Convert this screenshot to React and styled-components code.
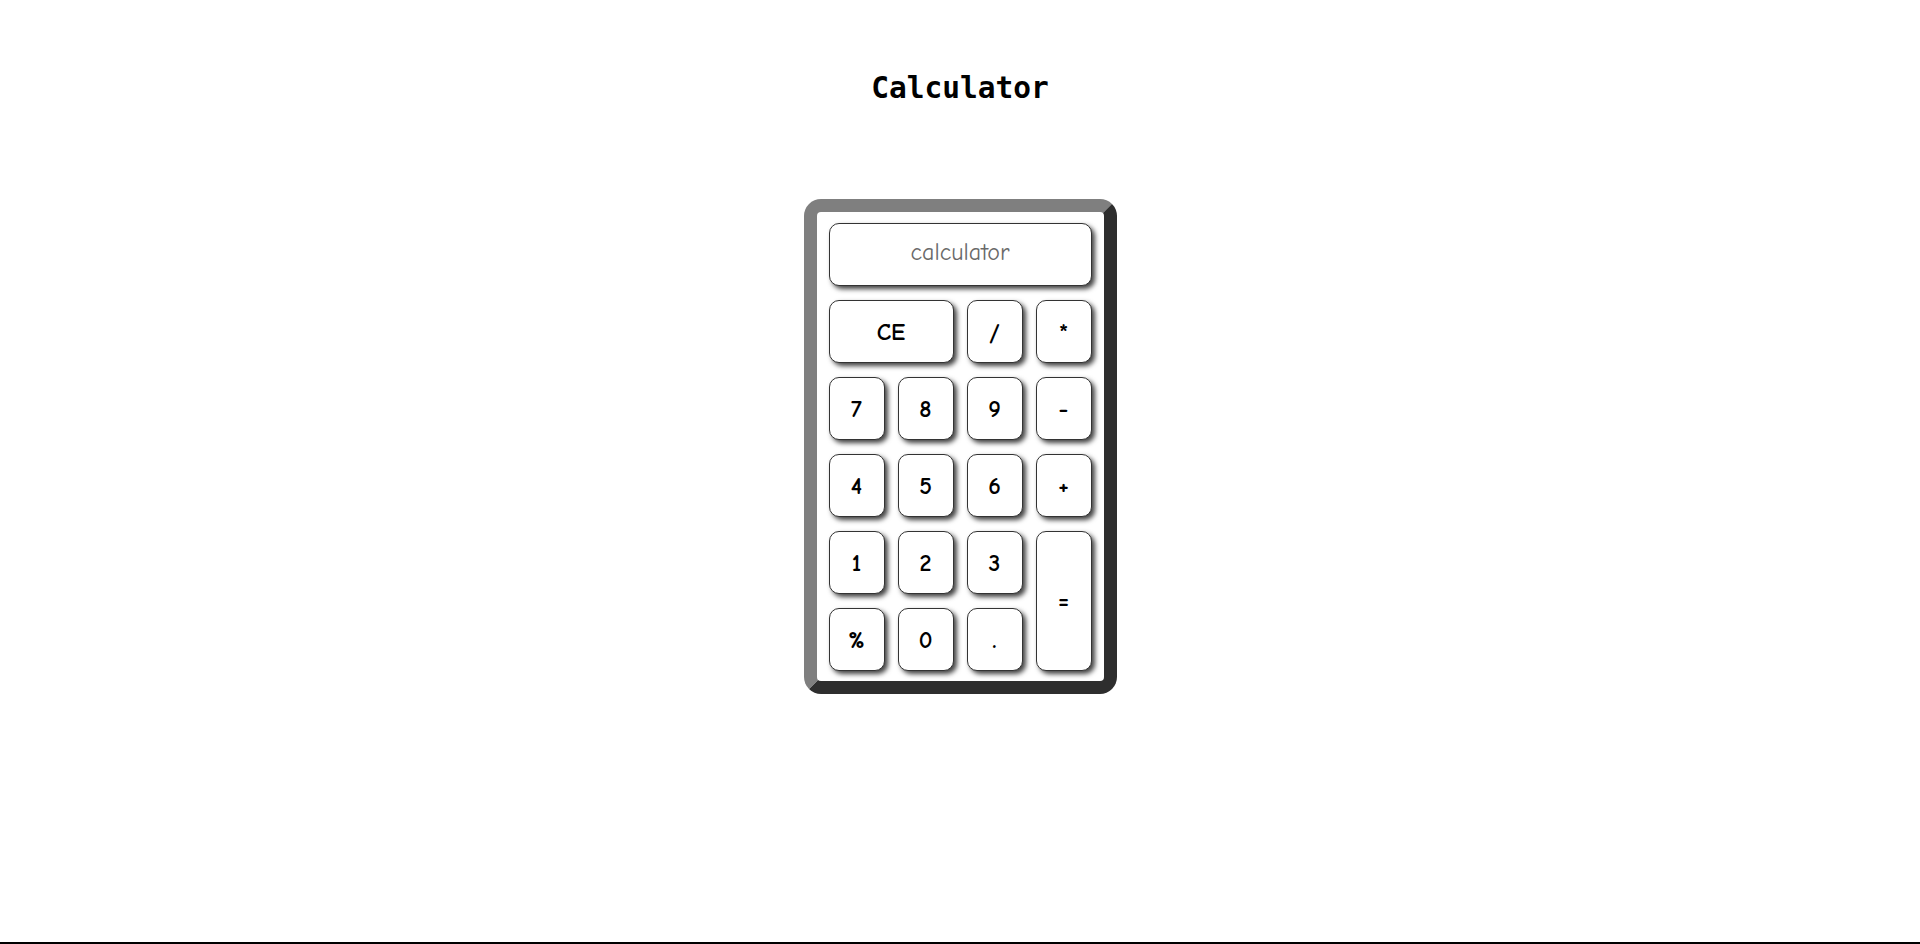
import styled, { createGlobalStyle } from 'styled-components';

const GlobalStyle = createGlobalStyle`
  html, body {
    margin: 0;
    padding: 0;
    background: #ffffff;
  }
`;

const Page = styled.div`
  box-sizing: border-box;
  height: 100vh;
  border-bottom: 2px solid #000;
  display: flex;
  flex-direction: column;
  align-items: center;
`;

const Title = styled.h1`
  margin: 71px 0 0;
  font-family: "DejaVu Sans Mono", "Liberation Mono", monospace;
  font-size: 29.5px;
  font-weight: bold;
  line-height: 34px;
  color: #000;
`;

const Body = styled.div`
  margin-top: 94px;
  box-sizing: border-box;
  width: 313px;
  padding: 11px 12px 10px;
  border: 13px solid;
  border-color: #7f7f7f #2e2e2e #2e2e2e #7f7f7f;
  border-radius: 17px;
  background: #fff;
`;

const Keys = styled.div`
  display: grid;
  grid-template-columns: repeat(4, 56px);
  grid-template-rows: repeat(6, 63px);
  column-gap: 13px;
  row-gap: 14px;
`;

const Screen = styled.input`
  grid-column: 1 / 5;
  box-sizing: border-box;
  width: 100%;
  height: 100%;
  padding: 0 0 6px;
  border: 1px solid #333;
  border-radius: 10px;
  background: #fff;
  box-shadow: 3px 3px 5px rgba(0, 0, 0, 0.75);
  text-align: center;
  font-family: "Comic Sans MS", "Comic Neue", "Open Sans", sans-serif;
  font-size: 24px;
  color: #666;
  outline: none;

  &::placeholder {
    color: #6a6a6a;
  }
`;

const Key = styled.button`
  grid-column: ${p => p.$span ? `span ${p.$span}` : 'auto'};
  grid-row: ${p => p.$tall ? 'span 2' : 'auto'};
  box-sizing: border-box;
  border: 1px solid #333;
  border-radius: 10px;
  background: #fff;
  box-shadow: 3px 3px 5px rgba(0, 0, 0, 0.75);
  font-family: "Comic Sans MS", "Comic Neue", "Open Sans", sans-serif;
  font-size: 24px;
  font-weight: bold;
  color: #000;
  padding: 0;
  cursor: pointer;
`;

const keys = [
  { label: 'CE', span: 2 },
  { label: '/' },
  { label: '*' },
  { label: '7' },
  { label: '8' },
  { label: '9' },
  { label: '-' },
  { label: '4' },
  { label: '5' },
  { label: '6' },
  { label: '+' },
  { label: '1' },
  { label: '2' },
  { label: '3' },
  { label: '=', tall: true },
  { label: '%' },
  { label: '0' },
  { label: '.' },
];

const App = () => (
  <>
    <GlobalStyle />
    <Page>
      <Title>Calculator</Title>
      <Body>
        <Keys>
          <Screen placeholder="calculator" readOnly />
          {keys.map(k => (
            <Key key={k.label} $span={k.span} $tall={k.tall}>
              {k.label}
            </Key>
          ))}
        </Keys>
      </Body>
    </Page>
  </>
);

export default App;
